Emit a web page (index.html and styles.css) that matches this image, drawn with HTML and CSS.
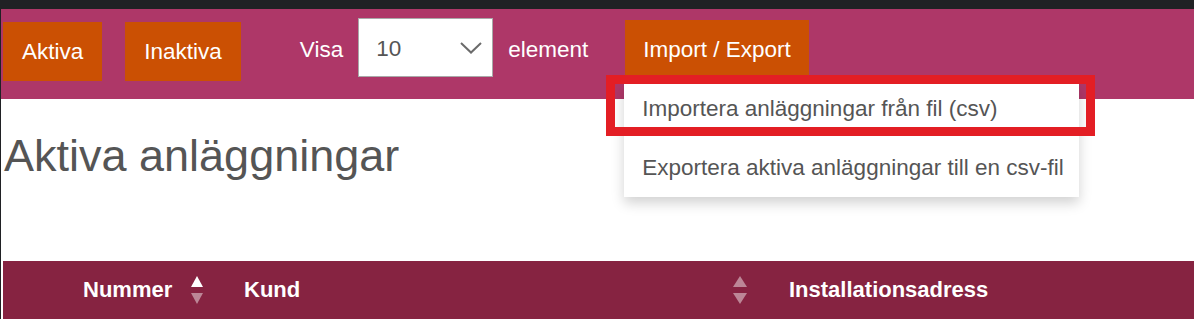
FILE: index.html
```html
<!DOCTYPE html>
<html lang="sv">
<head>
  <meta charset="UTF-8" />
  <title>Aktiva anläggningar</title>
  <link rel="stylesheet" href="styles.css">
</head>
<body>
  <nav class="toolbar">
    <button class="btn">Aktiva</button>
    <button class="btn btn-next">Inaktiva</button>
    <span class="label label-visa">Visa</span>
    <div class="select">
      <span>10</span>
      <svg class="chevron" width="22" height="12" viewBox="0 0 22 12">
        <polyline points="1,1 11,10.5 21,1" fill="none" stroke="#6b6b6b" stroke-width="2"/>
      </svg>
    </div>
    <span class="label label-elem">element</span>
    <div class="dropdown">
      <button class="btn btn-io">Import / Export</button>
      <ul class="dropdown-menu">
        <li>Importera anläggningar från fil (csv)</li>
        <li>Exportera aktiva anläggningar till en csv-fil</li>
      </ul>
      <!-- red annotation box around the first item -->
      <div class="marker"></div>
    </div>
  </nav>

  <main class="content">
    <h1>Aktiva anläggningar</h1>
    <div class="thead">
      <div class="th th-num">
        <span>Nummer</span>
        <svg class="sort" width="12" height="29" viewBox="0 0 12 29">
          <polygon points="6,0 12,11 0,11" fill="#fff"/>
          <polygon points="0,17 12,17 6,28" fill="#fff" fill-opacity="0.45"/>
        </svg>
      </div>
      <div class="th th-kund">
        <span>Kund</span>
        <svg class="sort" width="14" height="29" viewBox="0 0 14 29">
          <polygon points="7,0 14,11 0,11" fill="#fff" fill-opacity="0.45"/>
          <polygon points="0,17 14,17 7,28" fill="#fff" fill-opacity="0.45"/>
        </svg>
      </div>
      <div class="th th-addr">Installationsadress</div>
    </div>
  </main>
</body>
</html>
```

FILE: styles.css
```css
* {
  box-sizing: border-box;
}

body {
  margin: 0;
  min-height: 100vh;
  font-family: "Liberation Sans", Arial, sans-serif;
  background: #fff;
  border-top: 9px solid #202124;
  border-left: 1px solid #202124;
}

/* Pink toolbar */
.toolbar {
  display: flex;
  align-items: flex-start;
  height: 90px;
  padding-left: 2px;
  background: #ae3768;
}

.btn {
  margin-top: 13px;
  height: 59px;
  padding: 0 19px;
  border: none;
  background: #cb5003;
  color: #fff;
  font-family: inherit;
  font-size: 22.5px;
  line-height: 59px;
}

.btn-next {
  margin-left: 23px;
}

.label {
  margin-top: 11px;
  color: #fff;
  font-size: 22.5px;
  line-height: 59px;
}

.label-visa {
  margin-left: 59px;
}

.label-elem {
  margin-left: 15px;
}

.select {
  display: flex;
  align-items: center;
  justify-content: space-between;
  margin-left: 15px;
  margin-top: 9px;
  width: 135px;
  height: 59px;
  padding: 2px 10px 0 17px;
  background: #fff;
  border: 1px solid #a9a9a9;
  color: #555;
  font-size: 22.5px;
}

.chevron {
  margin-top: -2px;
}

/* Import / Export dropdown */
.dropdown {
  position: relative;
  margin-left: 37px;
}

.btn-io {
  margin-top: 11px;
  height: 63px;
  padding: 0 18px 4px;
}

.dropdown-menu {
  position: absolute;
  top: 74px;
  left: -1px;
  width: 455px;
  margin: 0;
  padding: 0;
  list-style: none;
  background: #fff;
  box-shadow: 0 6px 12px rgba(0, 0, 0, 0.18);
  z-index: 2;
}

.dropdown-menu li {
  padding: 12px 18px 16px;
  color: #555;
  font-size: 22.5px;
  line-height: 27px;
  white-space: nowrap;
}

.dropdown-menu li + li {
  margin-top: 4px;
}

.marker {
  position: absolute;
  top: 66px;
  left: -19px;
  width: 489px;
  height: 61px;
  border: 9px solid #e31e24;
  z-index: 3;
}

/* Page content */
.content {
  padding: 0 0 0 2px;
}

h1 {
  margin: 32px 0 0;
  padding-left: 1px;
  font-size: 45px;
  line-height: 50px;
  font-weight: normal;
  color: #555;
}

.thead {
  display: grid;
  grid-template-columns: 222px 543px 1fr;
  margin-top: 80px;
  height: 60px;
  background: #862341;
  color: #fff;
  font-size: 22px;
  font-weight: bold;
}

.th {
  display: flex;
  align-items: center;
  justify-content: space-between;
  line-height: 58px;
  height: 58px;
}

.th-num {
  padding: 0 22px 0 80px;
}

.th-kund {
  padding: 0 21px 0 19px;
}

.th-addr {
  padding-left: 21px;
}
```
